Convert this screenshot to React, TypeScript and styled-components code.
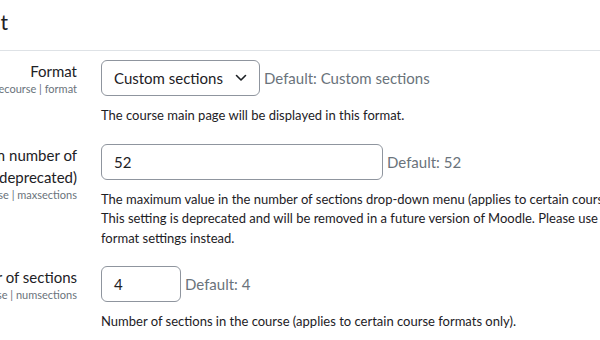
import React from "react";
import styled, { createGlobalStyle } from "styled-components";

const GlobalStyle = createGlobalStyle`
  html, body {
    margin: 0;
    padding: 0;
    background: #fff;
    overflow: hidden;
  }
  body {
    font-family: Lato, "Open Sans", sans-serif;
    color: #1d2125;
  }
`;

type Setting = {
  label: string[];
  name: string;
  kind: "select" | "text";
  value: string;
  width: number;
  defaultText: string;
  description: string[];
};

const settings: Setting[] = [
  {
    label: ["Format"],
    name: "moodlecourse | format",
    kind: "select",
    value: "Custom sections",
    width: 159,
    defaultText: "Default: Custom sections",
    description: ["The course main page will be displayed in this format."],
  },
  {
    label: ["Maximum number of", "sections (deprecated)"],
    name: "moodlecourse | maxsections",
    kind: "text",
    value: "52",
    width: 282,
    defaultText: "Default: 52",
    description: [
      "The maximum value in the number of sections drop-down menu (applies to certain course formats only).",
      "This setting is deprecated and will be removed in a future version of Moodle. Please use the course",
      "format settings instead.",
    ],
  },
  {
    label: ["Number of sections"],
    name: "moodlecourse | numsections",
    kind: "text",
    value: "4",
    width: 80,
    defaultText: "Default: 4",
    description: [
      "Number of sections in the course (applies to certain course formats only).",
    ],
  },
];

const Page = styled.div`
  margin-left: -85px;
  width: 900px;
`;

const Header = styled.div`
  height: 50px;
  border-bottom: 1px solid #dee2e6;
  margin-left: 85px;
  margin-right: -300px;
`;

const Heading = styled.h3`
  margin: 0 0 0 -292px;
  width: 300px;
  padding-top: 8px;
  text-align: right;
  white-space: nowrap;
  font-size: 21px;
  font-weight: 400;
  line-height: 28px;
`;

const List = styled.div`
  display: flex;
  flex-direction: column;
  gap: 18px;
  padding-top: 9px;
`;

const Row = styled.div`
  display: grid;
  grid-template-columns: 170px 1fr;
  column-gap: 16px;
`;

const LabelCol = styled.div`
  text-align: right;
  padding-right: 8px;
  white-space: nowrap;
`;

const Label = styled.div`
  font-size: 15px;
  line-height: 22px;
`;

const Name = styled.div`
  font-size: 11px;
  line-height: 14px;
  color: #6a737b;
`;

const Control = styled.div`
  display: flex;
  align-items: center;
  gap: 4px;
`;

const Box = styled.div<{ $w: number }>`
  box-sizing: border-box;
  width: ${(p) => p.$w}px;
  height: 36px;
  border: 1px solid #8f959e;
  border-radius: 6px;
  padding: 0 12px;
  display: flex;
  align-items: center;
  justify-content: space-between;
  font-size: 15px;
  color: #1d2125;
`;

const DefaultText = styled.span`
  font-size: 15px;
  color: #6a737b;
  white-space: nowrap;
`;

const Description = styled.div`
  margin-top: 10px;
  font-size: 13px;
  line-height: 19.5px;
  color: #1d2125;
  white-space: nowrap;
`;

const Chevron = () => (
  <svg width="12" height="8" viewBox="0 0 12 8" fill="none">
    <path d="M1.5 1.5 6 6l4.5-4.5" stroke="#1d2125" strokeWidth="1.6" strokeLinecap="round" strokeLinejoin="round" />
  </svg>
);

export default function App() {
  return (
    <Page>
      <GlobalStyle />
      <Header>
        <Heading>Course format</Heading>
      </Header>
      <List>
        {settings.map((s) => (
          <Row key={s.name}>
            <LabelCol>
              {s.label.map((l) => (
                <Label key={l}>{l}</Label>
              ))}
              <Name>{s.name}</Name>
            </LabelCol>
            <div>
              <Control>
                <Box $w={s.width}>
                  <span>{s.value}</span>
                  {s.kind === "select" && <Chevron />}
                </Box>
                <DefaultText>{s.defaultText}</DefaultText>
              </Control>
              <Description>
                {s.description.map((d) => (
                  <div key={d}>{d}</div>
                ))}
              </Description>
            </div>
          </Row>
        ))}
      </List>
    </Page>
  );
}
